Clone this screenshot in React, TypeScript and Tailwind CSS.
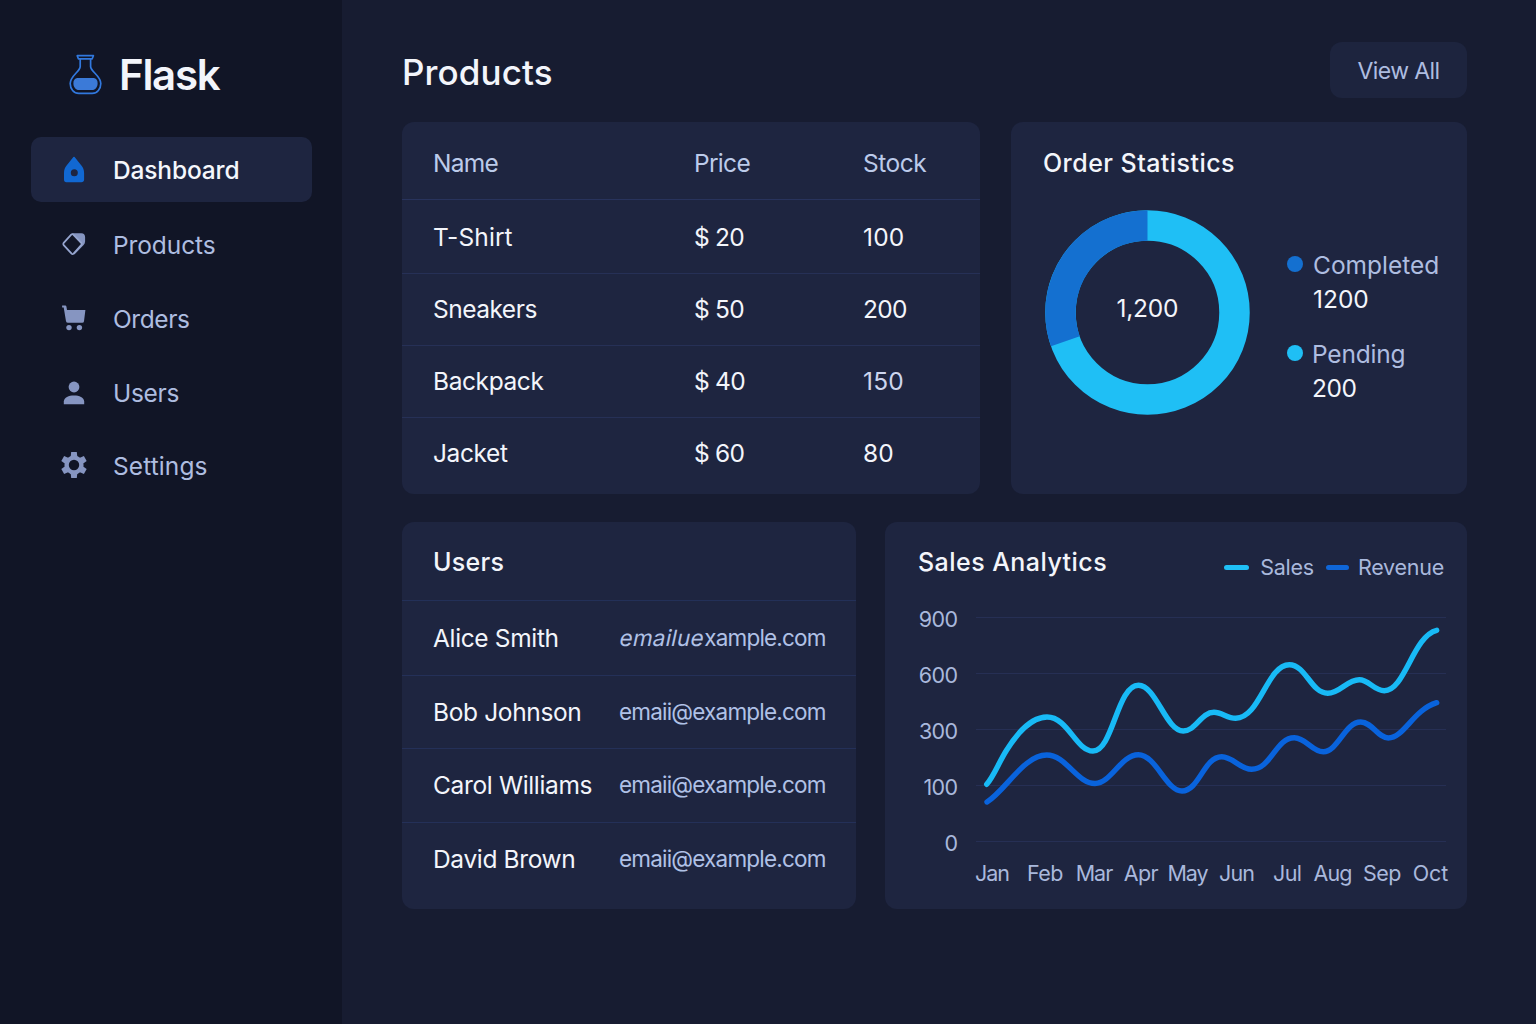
import React from "react";

const FONT = "font-['Inter','Liberation_Sans',sans-serif]";

function FlaskLogo() {
  return (
    <svg width="36" height="44" viewBox="0 0 36 44" fill="none" className="shrink-0">
      <path
        d="M10.2 2.7H26.4L25.2 5.8H11.4ZM13.2 6V13.6C12.8 19 3.2 22.6 3.2 30.6C3.2 36 6.8 40.4 11.8 40.4H25.2C30.2 40.4 33.8 36 33.8 30.6C33.8 22.6 24 19 23.6 13.6V6"
        stroke="#3178de"
        strokeWidth="1.7"
        strokeLinejoin="round"
      />
      <path d="M11 25H26C29 25 30.6 27.2 30.6 30.2C30.6 34 28.4 37 25 37H12C8.6 37 6.4 34 6.4 30.2C6.4 27.2 8 25 11 25Z" fill="#3b7ad8" />
    </svg>
  );
}

function HomeIcon() {
  return (
    <svg width="26" height="28" viewBox="0 0 26 28">
      <path
        fillRule="evenodd"
        fill="#1168d2"
        d="M13 0.8C13.5 0.8 13.8 1.2 14.2 1.7L20.4 9.6C22 11.7 23.1 14 23.1 17V23.6C23.1 25.5 22 26.3 20.4 26.3H5.4C3.8 26.3 3 25.5 3 23.6V17C3 14 4 11.7 5.6 9.6L11.8 1.7C12.2 1.2 12.5 0.8 13 0.8ZM13.3 13.2A3.5 3.5 0 1 0 13.3 20.2A3.5 3.5 0 1 0 13.3 13.2Z"
      />
    </svg>
  );
}

function TagIcon() {
  return (
    <svg width="26" height="26" viewBox="0 0 26 26">
      <path
        d="M11 2.2H20.4Q24 2.4 24.1 6V10.6Q24 12.6 22.6 14.1L13.4 23.4L12 22L20.6 12.9Z"
        fill="#8695c1"
      />
      <path
        d="M12.3 3.7L20.4 12Q21.2 12.9 20.4 13.8L12.6 22.5Q11.6 23.6 10.6 22.6L2.7 14.1Q1.8 13 2.7 11.8L10.2 3.7Q11.3 2.6 12.3 3.7Z"
        fill="#111526"
        stroke="#96a5cf"
        strokeWidth="1.8"
        strokeLinejoin="round"
      />
    </svg>
  );
}

function CartIcon() {
  return (
    <svg width="26" height="26" viewBox="0 0 26 26" fill="#8695c1">
      <path d="M1.1 0.6H4.3Q5.2 0.7 5.4 1.6L6 5H24.4L23 16.2Q22.8 17.8 21.2 17.8H7Q5.4 17.8 5 16.2L2.7 2.6H1.1Z" />
      <circle cx="8" cy="22.6" r="2.7" />
      <circle cx="18.4" cy="22.6" r="2.7" />
    </svg>
  );
}

function UserIcon() {
  return (
    <svg width="26" height="26" viewBox="0 0 26 26" fill="#8695c1">
      <circle cx="13" cy="7" r="5.4" />
      <path d="M2.8 24.2V21.6C3.2 17.4 7.6 15.6 13 15.6S22.8 17.4 23.2 21.6V24.2Z" />
    </svg>
  );
}

function GearIcon() {
  const teeth = [0, 60, 120, 180, 240, 300];
  return (
    <svg width="28" height="28" viewBox="0 0 28 28">
      {teeth.map((a) => (
        <path key={a} d="M11.2 1H16.8L17.4 6.5H10.6Z" fill="#8695c1" transform={`rotate(${a} 14 14)`} />
      ))}
      <circle cx="14" cy="14" r="7.4" fill="none" stroke="#8695c1" strokeWidth="4.4" />
    </svg>
  );
}

const nav = [
  { label: "Dashboard", icon: <HomeIcon />, iconCls: "pb-[2px]", cls: "bg-[#1e2540] pt-[2px] text-[#f5f7fc] font-medium tracking-[-0.15px]" },
  { label: "Products", icon: <TagIcon />, iconCls: "pb-[4px]", cls: "pt-[4px] text-[#aebde0] tracking-[-0.1px]" },
  { label: "Orders", icon: <CartIcon />, iconCls: "pb-[3px]", cls: "pt-[3px] text-[#aebde0] tracking-[-0.4px]" },
  { label: "Users", icon: <UserIcon />, iconCls: "pb-[2px]", cls: "pt-[4px] text-[#aebde0] tracking-[-0.3px]" },
  { label: "Settings", icon: <GearIcon />, iconCls: "pb-[4px]", cls: "pt-[2px] text-[#aebde0] tracking-[0.1px]" },
];

const products = [
  { name: "T-Shirt", price: "$ 20", stock: "100", cls: "h-[74px] border-b pt-[2px]", nameCls: "tracking-[0.1px]", stockCls: "tracking-[0.2px]" },
  { name: "Sneakers", price: "$ 50", stock: "200", cls: "h-[72px] border-b", nameCls: "tracking-[-0.5px]", stockCls: "tracking-[-0.7px]" },
  { name: "Backpack", price: "$ 40", stock: "150", cls: "h-[72px] border-b", nameCls: "tracking-[-0.4px]", stockCls: "tracking-[0.2px] text-[#ccd5ee]" },
  { name: "Jacket", price: "$ 60", stock: "80", cls: "h-[72px] pb-[2px]", nameCls: "tracking-[-0.4px]", stockCls: "" },
];

const users = [
  {
    name: "Alice Smith",
    email: (
      <>
        <span className="ml-px inline-block -skew-x-12 tracking-[0.2px]">emailue</span>
        <span className="tracking-[-0.8px]">xample.com</span>
      </>
    ),
    cls: "h-[75px] border-b",
  },
  { name: "Bob Johnson", email: "emaii@example.com", cls: "h-[73px] border-b" },
  { name: "Carol Williams", email: "emaii@example.com", cls: "h-[74px] border-b pb-px" },
  { name: "David Brown", email: "emaii@example.com", cls: "h-[74px] pb-[2px]" },
];

const months: [string, number, number][] = [
  ["Jan", 992.5, 35], ["Feb", 1045.2, 36.5], ["Mar", 1094.5, 37.5], ["Apr", 1141.2, 35], ["May", 1188, 41],
  ["Jun", 1237, 36], ["Jul", 1287.5, 29], ["Aug", 1333, 39], ["Sep", 1382.2, 38.5], ["Oct", 1430.5, 35.5],
];

const ticks: [string, number][] = [["900", 617.5], ["600", 673.5], ["300", 729.5], ["100", 785.5], ["0", 841.5]];

const sales =
  "M986.7 784.3C994 776 999 762 1006.7 750C1016 735 1031 717 1047 717C1068 717 1076 751 1093 751C1113 751 1117 685.3 1138.5 685.3C1156 685.3 1166 731 1183.3 731C1196 731 1201 712.3 1214 712.3C1222 712.3 1227 718.3 1235.7 718.3C1260 718.3 1267 664.7 1289.3 664.7C1306 664.7 1311 693.3 1327.7 693.3C1340 693.3 1347 679.7 1359.3 679.7C1369 679.7 1374 690.7 1384.3 690.7C1405 690.7 1413 636 1436.7 630.3";
const revenue =
  "M987 802C1006 790 1024 755 1046.7 755C1066 755 1077 783.5 1095 783.5C1111 783.5 1121 754.7 1138.3 754.7C1156 754.7 1166 791 1182 791C1199 791 1204 756.7 1221.7 756.7C1233 756.7 1240 769.3 1251.7 769.3C1271 769.3 1276 737.7 1294.3 737.7C1306 737.7 1312 751.7 1323.3 751.7C1338 751.7 1345 722 1360.7 722C1372 722 1378 738 1388.3 738C1404 738 1413 710 1436.7 702.7";

function SalesChart() {
  return (
    <svg width="582" height="310" viewBox="885 599 582 310" className="block">
      {ticks.map(([label, y]) => (
        <g key={label}>
          <line x1="976" x2="1446" y1={y} y2={y} stroke="#262f54" strokeWidth="1" />
          <text x="957.5" y={y + 9.9} textAnchor="end" fontSize="21.5" fill="#a9b8dc" letterSpacing="-0.6">
            {label}
          </text>
        </g>
      ))}
      <path d={revenue} fill="none" stroke="#0963dc" strokeWidth="5.4" strokeLinecap="round" />
      <path d={sales} fill="none" stroke="#18baf6" strokeWidth="5.4" strokeLinecap="round" />
      {months.map(([m, x, w]) => (
        <text key={m} x={x - w / 2} y="881" textLength={w} fontSize="21.5" fill="#a9b8dc">
          {m}
        </text>
      ))}
    </svg>
  );
}

function Donut() {
  return (
    <svg width="206" height="206" viewBox="-102.5 -103.5 206 206" className="block">
      <circle r="87" fill="none" stroke="#1fbff5" strokeWidth="30.5" />
      <path d="M0 -87A87 87 0 0 0 -82.1 28.8" fill="none" stroke="#1470d0" strokeWidth="30.5" />
      <text x="-31" y="4.6" fontSize="24.5" fill="#f3f5fb" textLength="62">
        1,200
      </text>
    </svg>
  );
}

export default function App() {
  return (
    <div className={`flex h-[1024px] w-[1536px] overflow-hidden bg-[#171c31] leading-none text-[#f3f5fb] ${FONT}`}>
      <aside className="flex w-[342px] shrink-0 flex-col bg-[#111526]">
        <div className="flex h-[137px] items-start pt-[53px] pl-[67px]">
          <FlaskLogo />
          <span className="ml-4 text-[42px] leading-[44px] font-semibold tracking-[-1.3px]">Flask</span>
        </div>
        <nav className="flex flex-col gap-[9px] pr-[30px] pl-[31px]">
          {nav.map((n) => (
            <a key={n.label} className={`flex h-[65px] items-center rounded-[10px] pl-[28px] text-[24.5px] ${n.cls}`}>
              <span className={`flex w-[30px] justify-center ${n.iconCls}`}>{n.icon}</span>
              <span className="ml-6">{n.label}</span>
            </a>
          ))}
        </nav>
      </aside>

      <main className="flex flex-1 flex-col pr-[69px] pl-[60px]">
        <header className="flex h-[122px] justify-between pt-[42px]">
          <h1 className="pt-[13px] text-[35px] font-medium tracking-[0.1px]">Products</h1>
          <button className="h-14 w-[137px] rounded-xl bg-[#1d243e] pt-[2px] text-[23px] tracking-[-0.6px] text-[#aebde0]">View All</button>
        </header>

        <div className="flex justify-between">
          <section className="h-[372px] w-[578px] rounded-xl bg-[#1e2540] text-[24.5px]">
            <div className="grid h-[78px] grid-cols-[262px_168px_1fr] items-center border-b border-[#28335c] pt-[5px] pl-[31px] tracking-[-0.7px] text-[#bccbea]">
              <span>Name</span>
              <span className="-ml-px">Price</span>
              <span className="tracking-[-0.5px]">Stock</span>
            </div>
            {products.map((p) => (
              <div key={p.name} className={`grid grid-cols-[262px_168px_1fr] items-center border-[#263056] pl-[31px] ${p.cls}`}>
                <span className={p.nameCls}>{p.name}</span>
                <span className="-ml-px tracking-[-0.75px]">{p.price}</span>
                <span className={p.stockCls}>{p.stock}</span>
              </div>
            ))}
          </section>

          <section className="h-[372px] w-[456px] rounded-xl bg-[#1e2540]">
            <h2 className="pt-[29px] pl-8 text-[25px] font-medium tracking-[0.45px]">Order Statistics</h2>
            <div className="flex pt-[33px] pl-[34px]">
              <Donut />
              <ul className="ml-9 pt-[44px] text-[24.5px]">
                <li className="flex">
                  <span className="mt-[3px] mr-[10px] size-4 rounded-full bg-[#1470d0]" />
                  <div className="flex flex-col gap-[9px]">
                    <span className="text-[#aebde0]">Completed</span>
                    <span>1200</span>
                  </div>
                </li>
                <li className="mt-[31px] flex">
                  <span className="mt-[3px] mr-[9px] size-4 rounded-full bg-[#1fbff5]" />
                  <div className="flex flex-col gap-[9px]">
                    <span className="tracking-[-0.2px] text-[#aebde0]">Pending</span>
                    <span className="tracking-[-0.4px]">200</span>
                  </div>
                </li>
              </ul>
            </div>
          </section>
        </div>

        <div className="mt-7 flex justify-between">
          <section className="h-[387px] w-[454px] rounded-xl bg-[#1e2540]">
            <h2 className="flex h-[79px] items-center border-b border-[#233058] pt-[3px] pl-[31px] text-[25px] font-medium tracking-[0.3px]">Users</h2>
            {users.map((u) => (
              <div key={u.name} className={`grid grid-cols-[186px_1fr] items-center border-[#243058] pl-[31px] whitespace-nowrap ${u.cls}`}>
                <span className="text-[24.5px] tracking-[-0.35px]">{u.name}</span>
                <span className="text-[22.5px] tracking-[-0.8px] text-[#b0c1e6]">{u.email}</span>
              </div>
            ))}
          </section>

          <section className="h-[387px] w-[582px] rounded-xl bg-[#1e2540]">
            <div className="flex h-[77px] justify-between pt-7 pr-[23px] pl-[33px]">
              <h2 className="text-[25px] font-medium tracking-[0.45px]">Sales Analytics</h2>
              <div className="flex h-[34px] items-center text-[21.5px] tracking-[-0.25px] text-[#a9b8dc]">
                <span className="mr-[11px] h-[5px] w-[25px] rounded-sm bg-[#1fbff5]" />
                <span className="pt-px">Sales</span>
                <span className="mr-[9px] ml-3 h-[5px] w-[23px] rounded-sm bg-[#0f66d8]" />
                <span className="pt-px">Revenue</span>
              </div>
            </div>
            <SalesChart />
          </section>
        </div>
      </main>
    </div>
  );
}
